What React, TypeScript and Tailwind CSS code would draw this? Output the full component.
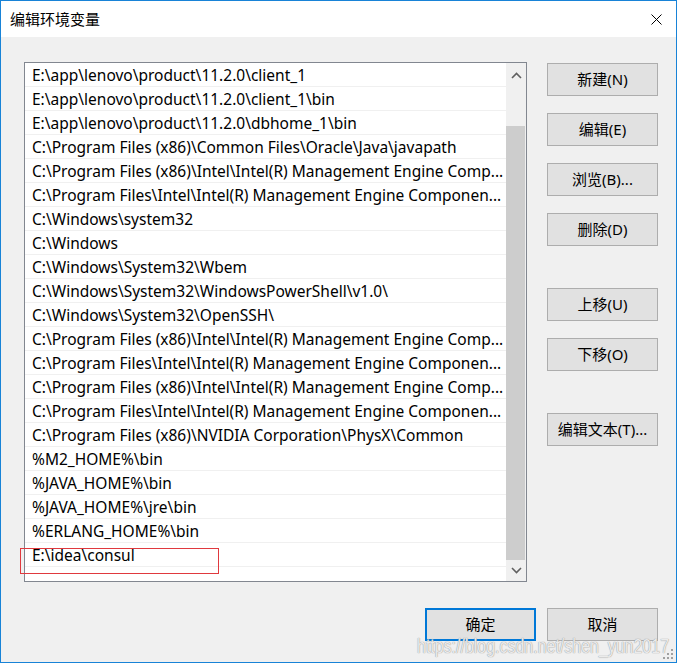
import React from "react";

const rows = [
  "E:\\app\\lenovo\\product\\11.2.0\\client_1",
  "E:\\app\\lenovo\\product\\11.2.0\\client_1\\bin",
  "E:\\app\\lenovo\\product\\11.2.0\\dbhome_1\\bin",
  "C:\\Program Files (x86)\\Common Files\\Oracle\\Java\\javapath",
  "C:\\Program Files (x86)\\Intel\\Intel(R) Management Engine Comp...",
  "C:\\Program Files\\Intel\\Intel(R) Management Engine Componen...",
  "C:\\Windows\\system32",
  "C:\\Windows",
  "C:\\Windows\\System32\\Wbem",
  "C:\\Windows\\System32\\WindowsPowerShell\\v1.0\\",
  "C:\\Windows\\System32\\OpenSSH\\",
  "C:\\Program Files (x86)\\Intel\\Intel(R) Management Engine Comp...",
  "C:\\Program Files\\Intel\\Intel(R) Management Engine Componen...",
  "C:\\Program Files (x86)\\Intel\\Intel(R) Management Engine Comp...",
  "C:\\Program Files\\Intel\\Intel(R) Management Engine Componen...",
  "C:\\Program Files (x86)\\NVIDIA Corporation\\PhysX\\Common",
  "%M2_HOME%\\bin",
  "%JAVA_HOME%\\bin",
  "%JAVA_HOME%\\jre\\bin",
  "%ERLANG_HOME%\\bin",
  "E:\\idea\\consul",
];

const font = "font-['Noto_Sans','Noto_Sans_CJK_SC',sans-serif]";

function Btn({ children, primary }: { children: React.ReactNode; primary?: boolean }) {
  return (
    <div
      className={`w-[111px] h-[33px] flex items-center justify-center bg-[#e1e1e1] text-[15px] text-black ${
        primary ? "border-2 border-[#0078d7]" : "border border-[#adadad]"
      }`}
    >
      {children}
    </div>
  );
}

export default function App() {
  return (
    <div className={`relative w-[677px] h-[663px] overflow-hidden border border-[#1883d7] bg-[#f0f0f0] flex flex-col ${font}`}>
      {/* title bar */}
      <div className="h-[36px] bg-white flex items-center justify-between pl-[9px] pr-[14px] shrink-0">
        <span className="text-[15px] text-black leading-none">编辑环境变量</span>
        <svg width="11" height="11" viewBox="0 0 11 11">
          <path d="M0.5 0.5 L10.5 10.5 M10.5 0.5 L0.5 10.5" stroke="#000" strokeWidth="1" fill="none" />
        </svg>
      </div>

      <div className="flex-1 flex flex-col pl-[23px] pr-[18px] pt-[25px] pb-[21px]">
        <div className="flex gap-[20px]">
          {/* list box */}
          <div className="relative w-[503px] h-[520px] border border-[#828790] bg-white flex">
            <div className="flex-1 overflow-hidden">
              {rows.map((r, i) => (
                <div
                  key={i}
                  className="h-[24px] border-b border-[#f0f0f0] pl-[7px] pt-[3px] flex items-center text-[15.5px] text-black whitespace-nowrap overflow-hidden"
                >
                  {r}
                </div>
              ))}
              <div className="h-[24px]" />
            </div>
            {/* scrollbar */}
            <div className="w-[20px] bg-[#f0f0f0] flex flex-col">
              <div className="h-[24px] flex items-center justify-center">
                <svg width="11" height="7" viewBox="0 0 11 7">
                  <path d="M1 6 L5.5 1.5 L10 6" stroke="#606060" strokeWidth="1.6" fill="none" />
                </svg>
              </div>
              <div className="h-[39px]" />
              <div className="flex-1 bg-[#cdcdcd] mr-px" />
              <div className="h-[21px] flex items-center justify-center">
                <svg width="11" height="7" viewBox="0 0 11 7">
                  <path d="M1 1 L5.5 5.5 L10 1" stroke="#606060" strokeWidth="1.6" fill="none" />
                </svg>
              </div>
            </div>
            {/* red highlight */}
            <div className="absolute left-[-5px] top-[485px] w-[199px] h-[26px] border border-[#e0393e]" />
          </div>

          {/* right buttons */}
          <div className="flex flex-col pt-px">
            <div className="flex flex-col gap-[17px]">
              <Btn>新建(N)</Btn>
              <Btn>编辑(E)</Btn>
              <Btn>浏览(B)...</Btn>
              <Btn>删除(D)</Btn>
            </div>
            <div className="flex flex-col gap-[17px] mt-[42px]">
              <Btn>上移(U)</Btn>
              <Btn>下移(O)</Btn>
            </div>
            <div className="mt-[42px]">
              <Btn>编辑文本(T)...</Btn>
            </div>
          </div>
        </div>

        <div className="flex justify-end gap-[11px] mt-[26px]">
          <Btn primary>确定</Btn>
          <Btn>取消</Btn>
        </div>
      </div>

      {/* watermark */}
      <div className="absolute left-[416px] top-[634px] whitespace-nowrap origin-left scale-x-[0.76] text-[21px] leading-none text-white/80 font-['Liberation_Sans',sans-serif] [text-shadow:0_0_1px_#999,0_0_1px_#999]">
        https://blog.csdn.net/shen_yun2017
      </div>

      {/* resize grip */}
      <svg className="absolute right-[3px] bottom-[3px]" width="10" height="10" viewBox="0 0 10 10">
        <rect x="8" y="0" width="2" height="2" fill="#a0a0a0" />
        <rect x="4" y="4" width="2" height="2" fill="#a0a0a0" />
        <rect x="8" y="4" width="2" height="2" fill="#a0a0a0" />
        <rect x="0" y="8" width="2" height="2" fill="#a0a0a0" />
        <rect x="4" y="8" width="2" height="2" fill="#a0a0a0" />
        <rect x="8" y="8" width="2" height="2" fill="#a0a0a0" />
      </svg>
    </div>
  );
}
